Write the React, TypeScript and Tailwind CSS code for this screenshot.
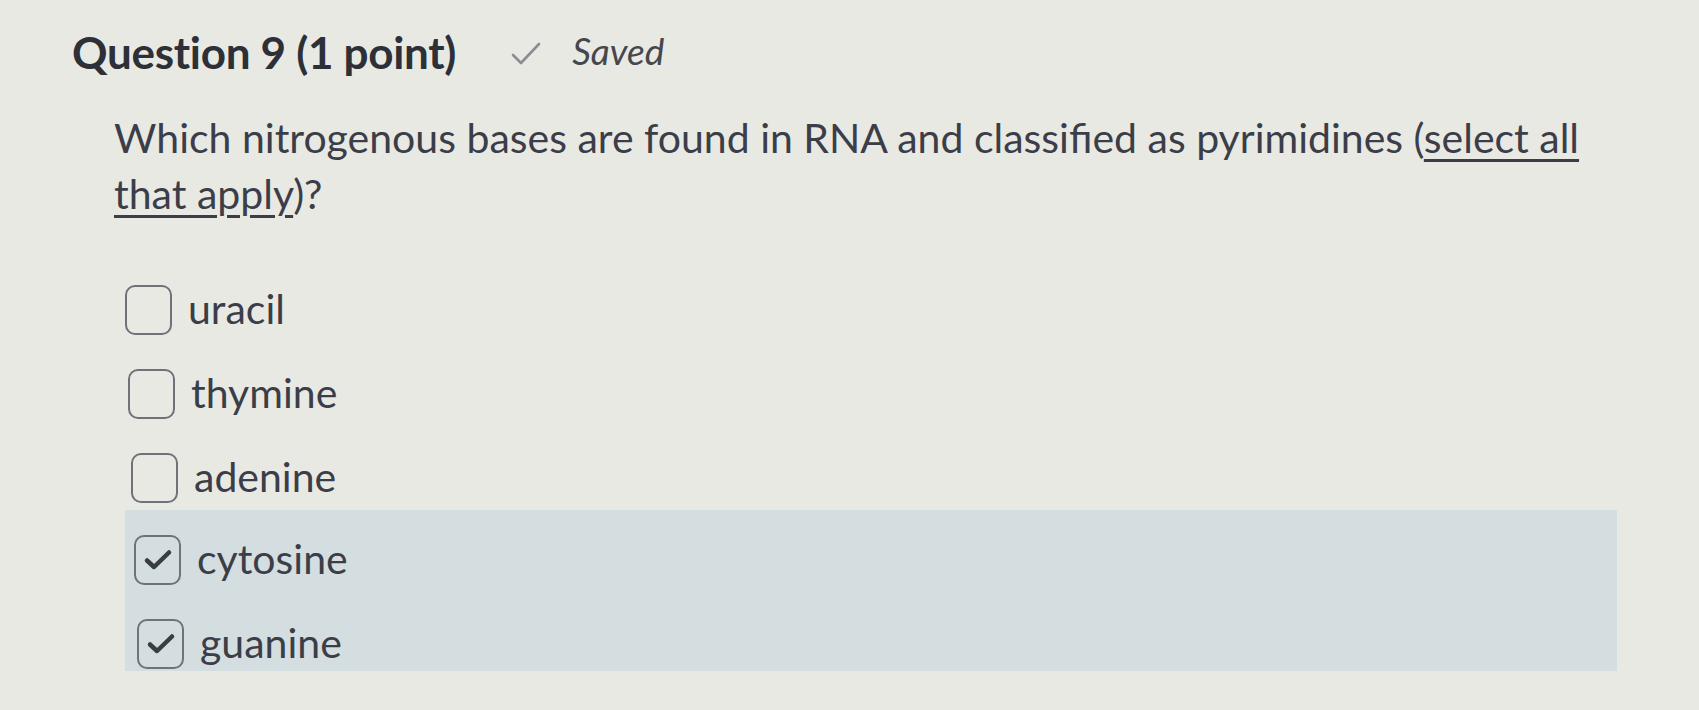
import React from "react";

const font = { fontFamily: "Lato, 'Noto Sans', sans-serif" };

function Box({ checked }: { checked?: boolean }) {
  return (
    <div className="w-[47px] h-[50px] shrink-0 rounded-[10px] border-[2.5px] border-[#6f727a] flex items-center justify-center">
      {checked && (
        <svg width="32" height="26" viewBox="0 0 32 26" fill="none">
          <path d="M5 13.5 L12 20 L27 5.5" stroke="#3a3d46" strokeWidth="4.5" strokeLinecap="round" strokeLinejoin="round" />
        </svg>
      )}
    </div>
  );
}

function Option({ label, checked, shift }: { label: string; checked?: boolean; shift: string }) {
  return (
    <div className={`flex items-center h-[84px] gap-[16px] ${shift}`}>
      <Box checked={checked} />
      <span className="text-[41px] leading-none text-[#3b3e48] pb-[4px]">{label}</span>
    </div>
  );
}

export default function App() {
  return (
    <div style={font} className="w-[1699px] h-[710px] bg-[#e9e9e4] overflow-hidden">
      <div className="pl-[72px] pt-[30px] flex items-end">
        <h1 className="text-[44px] font-bold leading-none text-[#2d3037] tracking-[-0.3px]">Question 9 (1 point)</h1>
        <div className="flex items-end ml-[54px] pb-[5px]">
          <svg width="32" height="26" viewBox="0 0 32 26" fill="none" className="mb-[2px]">
            <path d="M3 14 L11 22 L29 3" stroke="#8a8d92" strokeWidth="2.6" strokeLinecap="round" strokeLinejoin="round" />
          </svg>
          <span className="ml-[30px] text-[37px] italic leading-none text-[#44474d]">Saved</span>
        </div>
      </div>
      <div className="pl-[114px] w-[1604px] pt-[36px] text-[41px] leading-[56px] text-[#3b3e48]">
        Which nitrogenous bases are found in RNA and classified as pyrimidines (<span className="underline decoration-[3px] underline-offset-[6px]">select all that apply</span>)?
      </div>
      <div className="pl-[125px] pt-[46px] w-[1617px]">
        <Option label="uracil" shift="pl-0" />
        <Option label="thymine" shift="pl-[3px]" />
        <Option label="adenine" shift="pl-[6px]" />
        <div className="bg-[#d4dde0] -mt-[10px] h-[161px] pt-[8px]">
          <Option label="cytosine" checked shift="pl-[9px]" />
          <Option label="guanine" checked shift="pl-[12px]" />
        </div>
      </div>
    </div>
  );
}
